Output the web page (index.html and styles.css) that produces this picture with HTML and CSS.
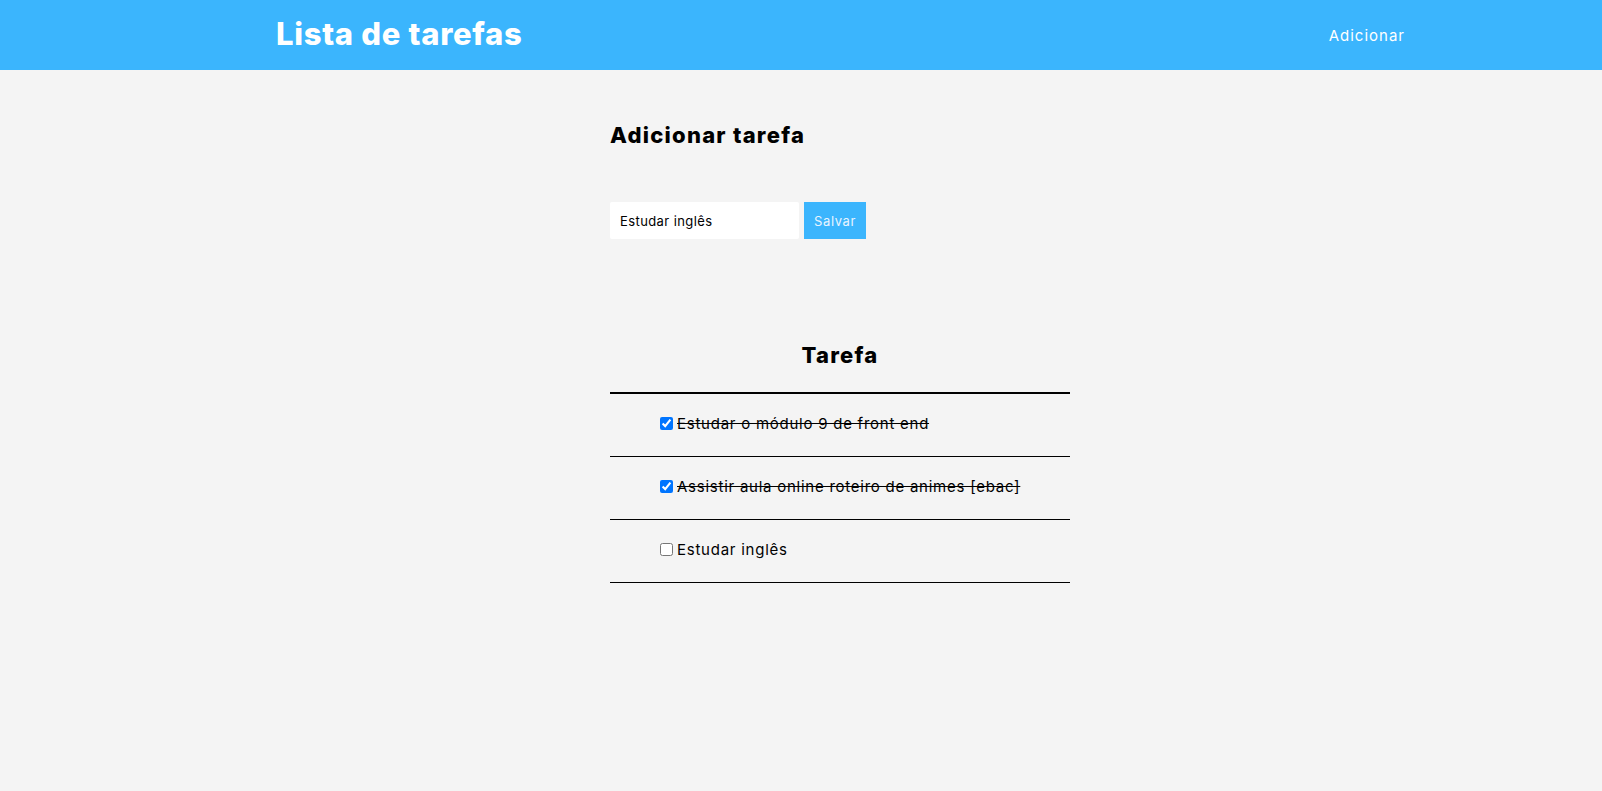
FILE: index.html
```html
<!DOCTYPE html>
<html lang="pt-BR">
<head>
<meta charset="utf-8">
<title>Lista de tarefas</title>
<link rel="stylesheet" href="styles.css">
</head>
<body>
<header class="topbar">
  <div class="topbar-inner">
    <h1 class="brand">Lista de tarefas</h1>
    <nav class="nav"><a class="nav-link" href="#">Adicionar</a></nav>
  </div>
</header>
<main class="page">
  <section class="panel">
    <h2 class="panel-title">Adicionar tarefa</h2>
    <form class="add-form">
      <input class="add-input" type="text" value="Estudar inglês">
      <button class="add-btn" type="button">Salvar</button>
    </form>
    <div class="tasks">
      <div class="tasks-head">Tarefa</div>
      <ul class="task-list">
        <li class="task"><input class="task-check" type="checkbox" checked><span class="task-text done">Estudar o módulo 9 de front end</span></li>
        <li class="task"><input class="task-check" type="checkbox" checked><span class="task-text done">Assistir aula online roteiro de animes [ebac]</span></li>
        <li class="task"><input class="task-check" type="checkbox"><span class="task-text">Estudar inglês</span></li>
      </ul>
    </div>
  </section>
</main>
</body>
</html>
```
FILE: styles.css
```css
* { box-sizing: border-box; }
body {
  margin: 0;
  background: #f4f4f4;
  font-family: Inter, "Noto Sans", sans-serif;
  color: #000;
}
.topbar {
  background: #3bb5fd;
  height: 70px;
}
.topbar-inner {
  width: 1208px;
  margin: 0 auto;
  padding-left: 79px;
  height: 100%;
  display: flex;
  align-items: center;
  justify-content: space-between;
}
.brand {
  margin: 0;
  font-size: 31px;
  font-weight: 800;
  color: #fff;
  line-height: 36px;
  padding-bottom: 2px;
  letter-spacing: 0.7px;
}
.nav-link {
  color: #fff;
  text-decoration: none;
  font-size: 15px;
  letter-spacing: 1px;
}
.page {
  width: 1208px;
  margin: 0 auto;
  padding-left: 413px;
}
.panel { width: 460px; }
.panel-title {
  margin: 52px 0 0;
  font-size: 22px;
  font-weight: 800;
  line-height: 26px;
  letter-spacing: 1.25px;
}
.add-form {
  margin-top: 54px;
  display: flex;
  gap: 5px;
}
.add-input {
  width: 189px;
  height: 37px;
  border: none;
  border-radius: 2px;
  background: #fff;
  padding: 0 10px;
  font-family: inherit;
  font-size: 13px;
  letter-spacing: 0.4px;
  color: #000;
}
.add-btn {
  width: 62px;
  height: 37px;
  border: none;
  background: #3bb5fd;
  color: #e8f4ff;
  font-family: inherit;
  font-size: 13px;
  letter-spacing: 0.6px;
  padding: 0;
}
.tasks { margin-top: 103px; }
.tasks-head {
  text-align: center;
  font-size: 22px;
  font-weight: 800;
  line-height: 26px;
  letter-spacing: 1.25px;
  padding-bottom: 24px;
  border-bottom: 2px solid #000;
}
.task-list {
  list-style: none;
  margin: 0;
  padding: 0;
}
.task {
  height: 63px;
  border-bottom: 1px solid #000;
  display: flex;
  align-items: center;
  padding-left: 50px;
  padding-bottom: 4px;
}
.task-check {
  margin: 0 4px 0 0;
  width: 13px;
  height: 13px;
}
.task-text { font-size: 15px; letter-spacing: 0.75px; }
.task-text.done { text-decoration: line-through; }
```
